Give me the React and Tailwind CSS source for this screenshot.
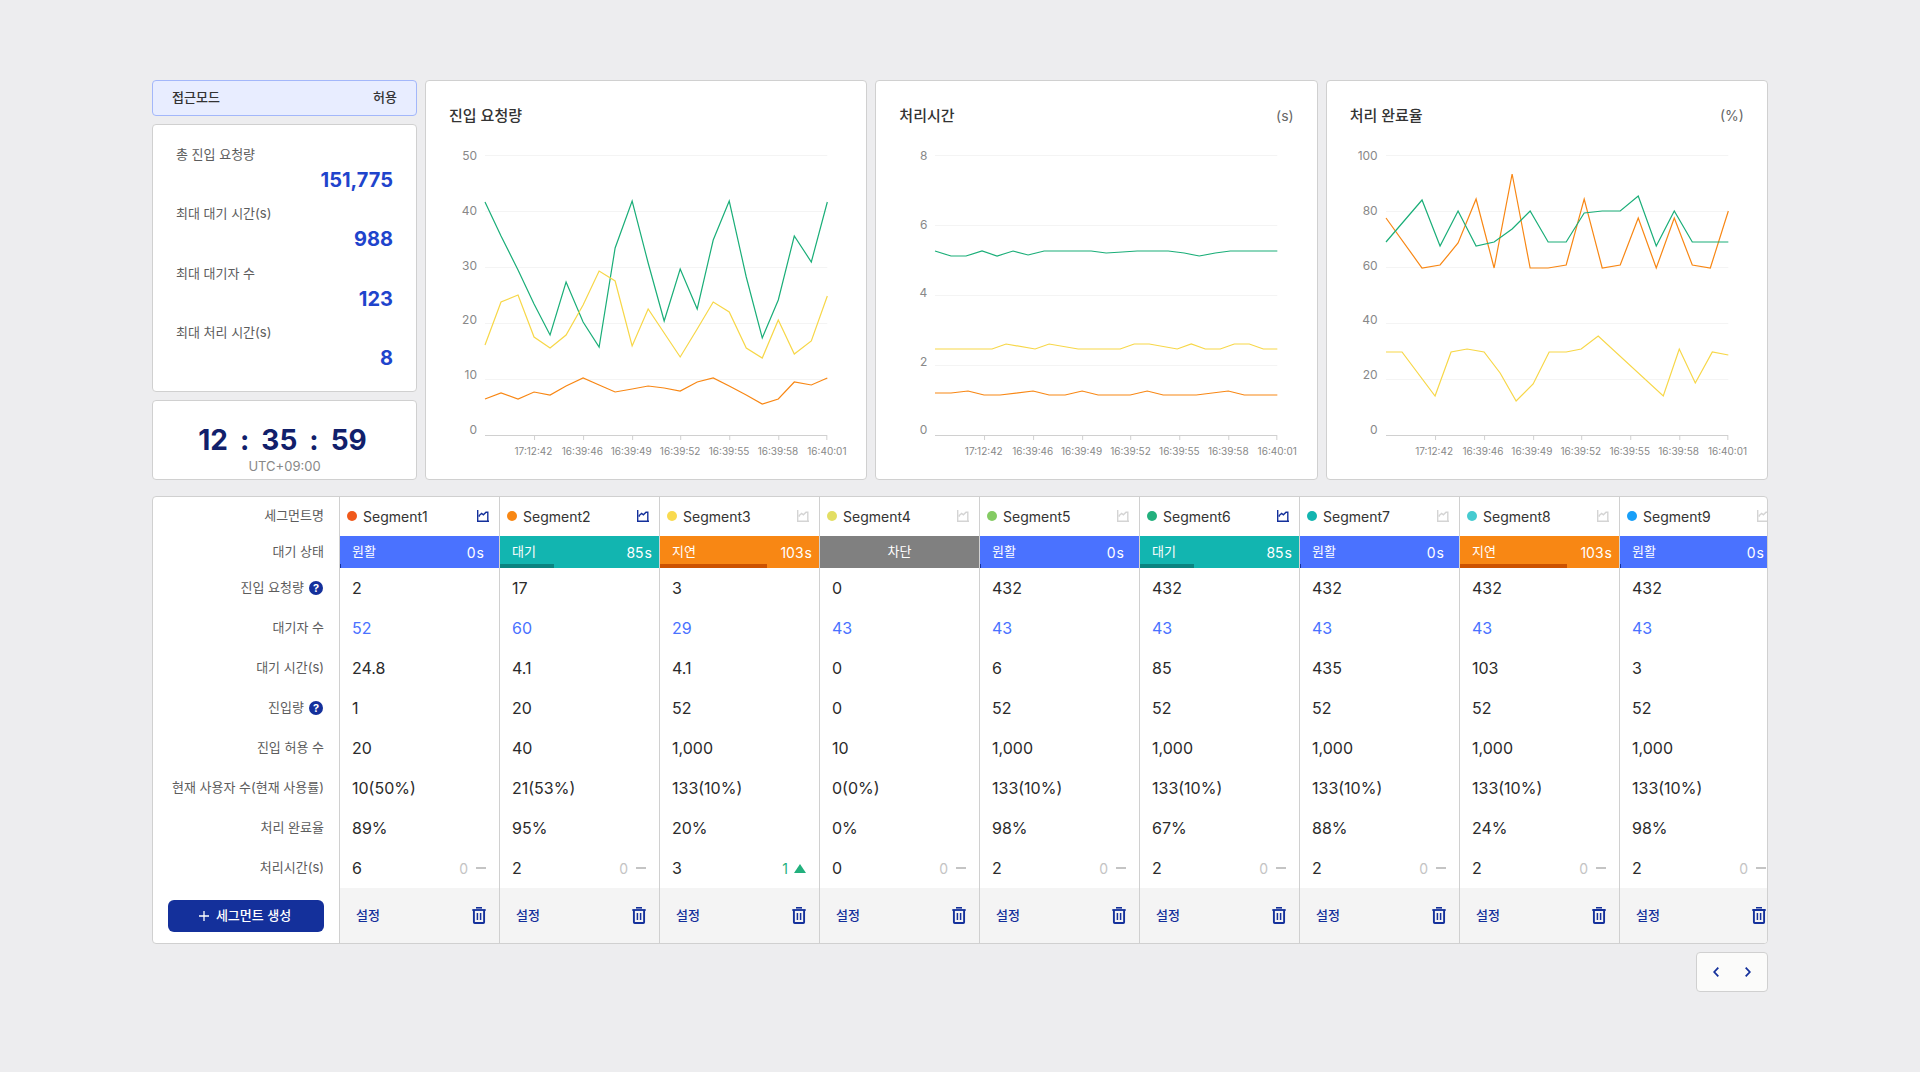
import React from 'react';

const times = ['17:12:42', '16:39:46', '16:39:49', '16:39:52', '16:39:55', '16:39:58', '16:40:01']

const stats = [
  { label: '총 진입 요청량', value: '151,775' },
  { label: '최대 대기 시간(s)', value: '988' },
  { label: '최대 대기자 수', value: '123' },
  { label: '최대 처리 시간(s)', value: '8' },
]

// Line points are in a 342 x 280 plot area, y grows downwards
const charts = [
  {
    title: '진입 요청량',
    unit: '',
    labels: ['50', '40', '30', '20', '10', '0'],
    lines: [
      { color: '#1aae78', points: '0,47 16,81 33,115 49,149 65,180 81,127 98,167 114,192 130,93 147,46 163,108 179,166 195,114 212,154 228,85 244,46 261,122 277,183 293,145 309,81 326,107 342,47' },
      { color: '#f7d748', points: '0,190 16,147 33,140 49,182 65,193 81,180 98,150 114,116 130,126 147,191 163,154 179,178 195,202 212,174 228,147 244,157 261,193 277,203 293,165 309,199 326,186 342,141' },
      { color: '#f88714', points: '0,244 16,238 33,244 49,237 65,240 81,231 98,223 114,230 130,237 147,234 163,231 179,233 195,236 212,227 228,223 244,231 261,240 277,249 293,244 309,227 326,230 342,223' },
    ],
  },
  {
    title: '처리시간',
    unit: '(s)',
    labels: ['8', '6', '4', '2', '0'],
    lines: [
      { color: '#1aae78', points: '0,96 16,101 31,101 47,96 62,101 78,96 93,100 109,96 140,96 156,96 171,98 187,97 202,96 233,96 249,98 264,101 280,98 295,96 342,96' },
      { color: '#f7d748', points: '0,194 57,194 71,189 100,194 114,189 143,194 185,194 199,189 214,189 242,194 256,189 270,194 285,194 299,189 314,189 328,194 342,194' },
      { color: '#f88714', points: '0,238 16,238 33,236 49,240 65,240 98,236 114,240 130,240 147,236 163,240 195,240 212,236 228,240 261,240 293,236 309,240 342,240' },
    ],
  },
  {
    title: '처리 완료율',
    unit: '(%)',
    labels: ['100', '80', '60', '40', '20', '0'],
    lines: [
      { color: '#f88714', points: '0,63 36,113 54,110 72,88 90,44 108,113 126,19 144,113 162,113 180,110 198,44 216,113 234,110 252,63 270,113 288,63 306,110 324,113 342,56' },
      { color: '#1aae78', points: '0,87 36,45 54,91 72,56 90,91 108,87 126,74 144,56 162,87 180,87 198,58 216,56 234,56 252,41 270,91 288,56 306,87 342,87' },
      { color: '#f7d748', points: '0,197 16,197 49,241 65,197 81,194 98,197 114,218 130,246 147,229 163,197 180,197 195,194 212,181 277,241 293,194 309,228 326,197 342,200' },
    ],
  },
]

const segments = [
  { name: 'Segment1', dot: 'bg-[#f0591b]', pinned: true, status: 'smooth', sec: 0, request: '2', waiting: '52', waitTime: '24.8', entered: '1', allowed: '20', users: '10(50%)', rate: '89%', time: '6', diff: 0 },
  { name: 'Segment2', dot: 'bg-[#f88714]', pinned: true, status: 'waiting', sec: 85, request: '17', waiting: '60', waitTime: '4.1', entered: '20', allowed: '40', users: '21(53%)', rate: '95%', time: '2', diff: 0 },
  { name: 'Segment3', dot: 'bg-[#f9da4f]', pinned: false, status: 'delayed', sec: 103, request: '3', waiting: '29', waitTime: '4.1', entered: '52', allowed: '1,000', users: '133(10%)', rate: '20%', time: '3', diff: 1 },
  { name: 'Segment4', dot: 'bg-[#e3de63]', pinned: false, status: 'blocked', sec: 0, request: '0', waiting: '43', waitTime: '0', entered: '0', allowed: '10', users: '0(0%)', rate: '0%', time: '0', diff: 0 },
  { name: 'Segment5', dot: 'bg-[#84cb63]', pinned: false, status: 'smooth', sec: 0, request: '432', waiting: '43', waitTime: '6', entered: '52', allowed: '1,000', users: '133(10%)', rate: '98%', time: '2', diff: 0 },
  { name: 'Segment6', dot: 'bg-[#22b07d]', pinned: true, status: 'waiting', sec: 85, request: '432', waiting: '43', waitTime: '85', entered: '52', allowed: '1,000', users: '133(10%)', rate: '67%', time: '2', diff: 0 },
  { name: 'Segment7', dot: 'bg-[#12b5b0]', pinned: false, status: 'smooth', sec: 0, request: '432', waiting: '43', waitTime: '435', entered: '52', allowed: '1,000', users: '133(10%)', rate: '88%', time: '2', diff: 0 },
  { name: 'Segment8', dot: 'bg-[#46cbd0]', pinned: false, status: 'delayed', sec: 103, request: '432', waiting: '43', waitTime: '103', entered: '52', allowed: '1,000', users: '133(10%)', rate: '24%', time: '2', diff: 0 },
  { name: 'Segment9', dot: 'bg-[#189ff8]', pinned: false, status: 'smooth', sec: 0, request: '432', waiting: '43', waitTime: '3', entered: '52', allowed: '1,000', users: '133(10%)', rate: '98%', time: '2', diff: 0 },
]

const statuses = {
  smooth: { label: '원활', bg: 'bg-[#4a72ff]', bar: 'w-px bg-[#14309b]', pad: 'pr-[15px]' },
  waiting: { label: '대기', bg: 'bg-[#12b5b0]', bar: 'w-[54px] bg-[#0a8480]', pad: 'pr-[7px]' },
  delayed: { label: '지연', bg: 'bg-[#f88714]', bar: 'w-[107px] bg-[#cc5200]', pad: 'pr-[7px]' },
}

const rows = [
  { key: 'request', label: '진입 요청량', help: true },
  { key: 'waiting', label: '대기자 수', color: 'text-[#4a72ff]' },
  { key: 'waitTime', label: '대기 시간(s)' },
  { key: 'entered', label: '진입량', help: true },
  { key: 'allowed', label: '진입 허용 수' },
  { key: 'users', label: '현재 사용자 수(현재 사용률)' },
  { key: 'rate', label: '처리 완료율' },
]

const thClass = 'pr-[15px] text-right text-[13px] font-normal text-[#5c5c5c]'
const tdClass = 'border-l border-[#d0d0d0] p-0'

function ChartIcon() {
  return (
    <svg width="12" height="12" viewBox="0 0 12 12" fill="none" stroke="currentColor" aria-hidden="true">
      <path d="M0.7 0V11.3H12" strokeWidth="1.4" />
      <path d="M2.2 6.8V5.6L4.6 3.4L6.4 4.8L9 2.2H10.8V11" strokeWidth="1.4" />
    </svg>
  )
}

function TrashIcon() {
  return (
    <svg width="14" height="17" viewBox="0 0 14 17" fill="none" stroke="currentColor" aria-hidden="true">
      <path d="M4 0.8H10" strokeWidth="1.6" />
      <path d="M0.3 3H13.7" strokeWidth="1.8" />
      <path d="M1.9 3V15.2Q1.9 16 2.7 16H11.3Q12.1 16 12.1 15.2V3" strokeWidth="1.9" />
      <path d="M5.4 6V13M8.6 6V13" strokeWidth="1.5" />
    </svg>
  )
}

function HelpIcon() {
  return (
    <button type="button" aria-label="도움말" className="mr-px flex size-[14px] items-center justify-center rounded-full bg-[#14309b] text-[11px] leading-none font-bold text-white">
      ?
    </button>
  )
}

function Chart({ chart }) {
  const step = 280 / (chart.labels.length - 1)

  return (
    <section className="min-w-0 flex-1 rounded border border-[#d0d0d0] bg-white px-[23px] pt-[23px]">
      <div className="flex h-6 items-start justify-between">
        <h2 className="text-[15px] leading-6 font-medium text-[#333]">{chart.title}</h2>
        <span className="text-[14px] leading-6 text-[#666]">{chart.unit}</span>
      </div>
      <div className="mt-[18px] flex gap-2 pr-4">
        <div className="flex h-[294px] w-7 flex-col justify-between text-right text-[12px] leading-5 text-[#888]">
          {chart.labels.map((label) => <span key={label}>{label}</span>)}
        </div>
        <div className="min-w-0 flex-1 pt-[9px]">
          <svg className="block h-[286px] w-full overflow-visible" viewBox="0 0 342 286" preserveAspectRatio="none" fill="none">
            {chart.labels.slice(1).map((label, i) => (
              <path key={label} d={`M0 ${i * step + 0.5}H342`} stroke="#f4f4f4" />
            ))}
            <path d="M0 280.5H342" stroke="#d0d0d0" />
            {times.map((time, i) => (
              <path key={time} d={`M${Math.min(Math.round((i + 1) * 48.86) + 0.5, 341.5)} 281V285`} stroke="#d0d0d0" />
            ))}
            {chart.lines.map((line) => (
              <polyline key={line.color} points={line.points} stroke={line.color} strokeWidth="1.2" />
            ))}
          </svg>
          {/* Time axis, every label is centered on its tick */}
          <div className="-mr-6 mt-[2px] ml-6 grid grid-cols-7 text-center text-[10px] leading-4 text-[#888]">
            {times.map((time) => <span key={time}>{time}</span>)}
          </div>
        </div>
      </div>
    </section>
  )
}

function StatusCell({ segment }) {
  if (segment.status === 'blocked') {
    return <div className="flex h-8 items-center justify-center bg-[#808080] text-[13px] text-white">차단</div>
  }
  const status = statuses[segment.status]
  return (
    <div className={`relative flex h-8 items-center justify-between pl-3 text-white ${status.bg} ${status.pad}`}>
      <span className="text-[13px]">{status.label}</span>
      <span className="flex gap-px text-[14px]"><span>{segment.sec}</span><span>s</span></span>
      <span className={`absolute bottom-0 left-0 h-1 ${status.bar}`} />
    </div>
  )
}

function App() {
  return (
    <main className="min-h-screen bg-[#ededef] px-[152px] py-20 font-['Inter','Noto_Sans_CJK_KR',sans-serif]">
      <div className="flex gap-2">
        {/* Left summary */}
        <div className="flex w-[265px] shrink-0 flex-col gap-2">
          <div className="flex h-9 items-center justify-between rounded border border-[#a3b7fa] bg-[#e8edff] px-[19px] text-[13px] font-medium text-[#333]">
            <span>접근모드</span>
            <span>허용</span>
          </div>
          <dl className="flex flex-1 flex-col justify-between rounded border border-[#d0d0d0] bg-white px-[23px] pt-[19px] pb-[17px]">
            {stats.map((stat) => (
              <div key={stat.label}>
                <dt className="text-[13px] leading-5 text-[#5c5c5c]">{stat.label}</dt>
                <dd className="text-right text-[20px] leading-8 font-bold text-[#1f44cc]">{stat.value}</dd>
              </div>
            ))}
          </dl>
          <div className="flex h-20 flex-col items-center rounded border border-[#d0d0d0] bg-white pt-[23px]">
            <div className="flex gap-3 pr-1 text-[28px] leading-8 font-bold text-[#11206b]">
              <span>12</span><span>:</span><span>35</span><span>:</span><span>59</span>
            </div>
            <span className="text-[13px] leading-5 text-[#888]">UTC+09:00</span>
          </div>
        </div>

        {/* Charts */}
        <div className="flex h-[400px] min-w-0 flex-1 gap-2">
          {charts.map((chart) => <Chart key={chart.title} chart={chart} />)}
        </div>
      </div>

      {/* Segment table */}
      <div className="mt-4 overflow-hidden rounded border border-[#d0d0d0] bg-white">
        <table className="w-max table-fixed border-separate border-spacing-0">
          <thead>
            <tr className="h-[39px]">
              <th scope="row" className={`w-[186px] pb-[2px] ${thClass}`}>세그먼트명</th>
              {segments.map((segment) => (
                <th key={segment.name} scope="col" className={`w-40 font-normal ${tdClass}`}>
                  <div className="flex items-center pr-[10px] pb-px pl-[7px]">
                    <span className={`size-[10px] rounded-full ${segment.dot}`} />
                    <span className="ml-[6px] text-[14px] text-[#333]">{segment.name}</span>
                    <button type="button" aria-label={`${segment.name} 차트`} className={`ml-auto ${segment.pinned ? 'text-[#14309b]' : 'text-[#d4d4d4]'}`}>
                      <ChartIcon />
                    </button>
                  </div>
                </th>
              ))}
            </tr>
          </thead>
          <tbody>
            <tr className="h-8">
              <th scope="row" className={thClass}>대기 상태</th>
              {segments.map((segment) => (
                <td key={segment.name} className={tdClass}><StatusCell segment={segment} /></td>
              ))}
            </tr>
            {rows.map((row) => (
              <tr key={row.key} className="h-10">
                <th scope="row" className={thClass}>
                  <div className="flex items-center justify-end gap-[5px]">
                    {row.label}
                    {row.help && <HelpIcon />}
                  </div>
                </th>
                {segments.map((segment) => (
                  <td key={segment.name} className={tdClass}>
                    <div className={`pl-3 text-[16px] ${row.color || 'text-[#2b2b2b]'}`}>{segment[row.key]}</div>
                  </td>
                ))}
              </tr>
            ))}
            <tr className="h-10">
              <th scope="row" className={thClass}>처리시간(s)</th>
              {segments.map((segment) => (
                <td key={segment.name} className={tdClass}>
                  <div className="flex items-center justify-between pr-[13px] pl-3 text-[16px] text-[#2b2b2b]">
                    <span>{segment.time}</span>
                    {segment.diff > 0 ? (
                      <span className="flex items-center gap-[6px] text-[14px] text-[#22b07d]">
                        {segment.diff}
                        <svg width="12" height="9" viewBox="0 0 12 9" fill="currentColor" aria-hidden="true"><path d="M6 0L12 9H0Z" /></svg>
                      </span>
                    ) : (
                      <span className="flex items-center gap-2 text-[14px] text-[#c4c4c4]">
                        {segment.diff}
                        <span className="h-[2px] w-[10px] bg-[#c4c4c4]" />
                      </span>
                    )}
                  </div>
                </td>
              ))}
            </tr>
          </tbody>
          <tfoot>
            <tr className="h-[55px]">
              <td className="p-0 pr-[15px] pl-[15px]">
                <button type="button" className="flex h-8 w-full items-center justify-center gap-[7px] rounded-md bg-[#14309b] pr-[2px] text-[13px] font-medium text-white">
                  <svg width="10" height="10" viewBox="0 0 10 10" stroke="currentColor" strokeWidth="1.3" aria-hidden="true"><path d="M5 0V10M0 5H10" /></svg>
                  세그먼트 생성
                </button>
              </td>
              {segments.map((segment) => (
                <td key={segment.name} className={`bg-[#f4f4f4] ${tdClass}`}>
                  <div className="flex items-center justify-between pr-[13px] pl-4 text-[#14309b]">
                    <button type="button" className="text-[13px] font-medium">설정</button>
                    <button type="button" aria-label={`${segment.name} 삭제`}><TrashIcon /></button>
                  </div>
                </td>
              ))}
            </tr>
          </tfoot>
        </table>
      </div>

      {/* Pager */}
      <nav className="mt-2 ml-auto flex h-10 w-[72px] items-center justify-center gap-[26px] rounded border border-[#d0d0d0] bg-[#fbfbfa] text-[#14309b]">
        <button type="button" aria-label="이전">
          <svg width="6" height="10" viewBox="0 0 6 10" fill="none" stroke="currentColor" strokeWidth="1.8"><path d="M5.3 0.7L1.2 5L5.3 9.3" /></svg>
        </button>
        <button type="button" aria-label="다음">
          <svg width="6" height="10" viewBox="0 0 6 10" fill="none" stroke="currentColor" strokeWidth="1.8"><path d="M0.7 0.7L4.8 5L0.7 9.3" /></svg>
        </button>
      </nav>
    </main>
  )
}

export default App;
